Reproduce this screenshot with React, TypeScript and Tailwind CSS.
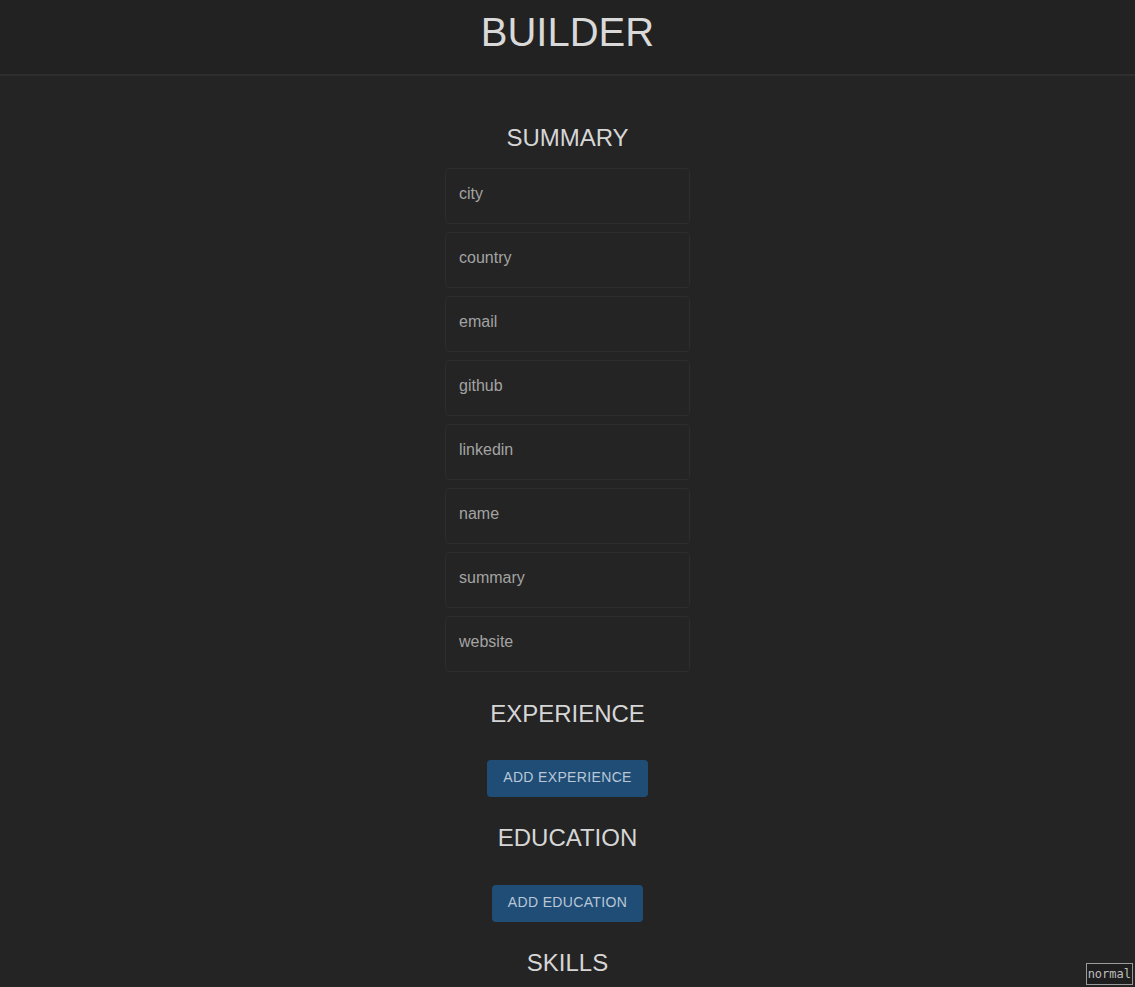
import React from "react";

const fields = ["city", "country", "email", "github", "linkedin", "name", "summary", "website"];

function Heading({ children, className = "" }: { children: React.ReactNode; className?: string }) {
  return (
    <h2 className={`text-[24px] leading-[28px] text-[#d6d6d6] text-center ${className}`}>{children}</h2>
  );
}

function Btn({ children }: { children: React.ReactNode }) {
  return (
    <button className="h-[37px] px-[16px] pb-[2px] rounded-[4px] bg-[#1f4d76] text-[#b9c7d6] text-[14px] tracking-[0.35px]">
      {children}
    </button>
  );
}

export default function App() {
  return (
    <div
      className="min-h-[987px] bg-[#242424] text-[#d6d6d6]"
      style={{ fontFamily: '"Liberation Sans", Arial, sans-serif' }}
    >
      <header className="h-[76px] bg-[#222222] border-b-2 border-[#2e2e2e] flex justify-center pt-[9px]">
        <h1 className="text-[40px] leading-[46px] text-[#d9d9d9]">BUILDER</h1>
      </header>
      <main className="flex flex-col items-center">
        <Heading className="mt-[48px]">SUMMARY</Heading>
        <div className="mt-[16px] flex flex-col gap-[8px] w-[245px]">
          {fields.map((f) => (
            <input
              key={f}
              placeholder={f}
              className="h-[56px] w-full rounded-[4px] border border-[#2d2d2d] bg-[#242424] px-[13px] pb-[4px] text-[16px] text-[#d6d6d6] placeholder:text-[#a3a3a3] outline-none"
            />
          ))}
        </div>
        <Heading className="mt-[28px]">EXPERIENCE</Heading>
        <div className="mt-[32px]">
          <Btn>ADD EXPERIENCE</Btn>
        </div>
        <Heading className="mt-[27px]">EDUCATION</Heading>
        <div className="mt-[33px]">
          <Btn>ADD EDUCATION</Btn>
        </div>
        <Heading className="mt-[27px]">SKILLS</Heading>
        <div className="h-[40px]" />
      </main>
      <div
        className="fixed right-[2px] bottom-[2px] border border-[#9a9a9a] bg-[#1e1e1e] px-[1px] text-[12px] leading-[20px] text-[#bdbdbd]"
        style={{ fontFamily: '"DejaVu Sans Mono", monospace' }}
      >
        normal
      </div>
    </div>
  );
}
